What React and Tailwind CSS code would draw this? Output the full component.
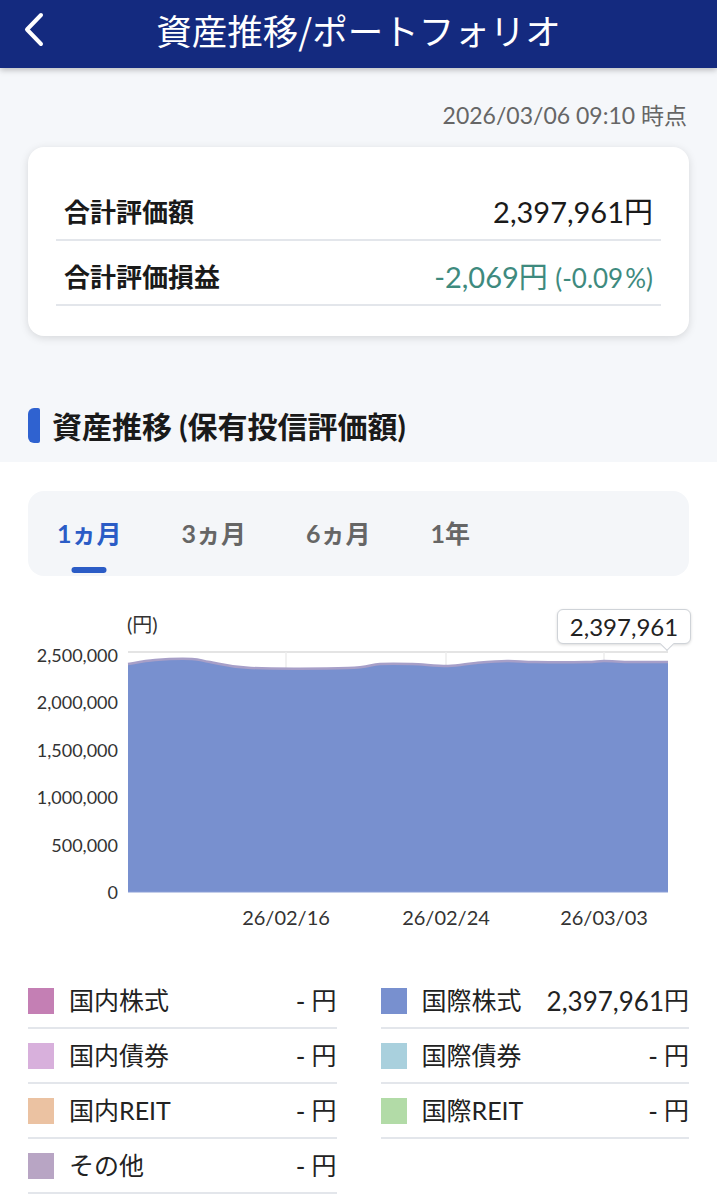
import React from "react";

const pts = [
  [128, 88], [155, 84], [192, 83], [210, 86], [251, 92], [348, 92], [380, 88],
  [412, 88], [448, 90], [476, 87], [507, 85], [535, 86], [586, 86], [604, 85],
  [631, 86], [668, 86],
];

function smoothLine(p) {
  let d = `M${p[0][0]},${p[0][1]}`;
  for (let i = 0; i < p.length - 1; i++) {
    const p0 = p[i - 1] || p[i];
    const p1 = p[i];
    const p2 = p[i + 1];
    const p3 = p[i + 2] || p2;
    const c1x = p1[0] + (p2[0] - p0[0]) / 6;
    const c1y = p1[1] + (p2[1] - p0[1]) / 6;
    const c2x = p2[0] - (p3[0] - p1[0]) / 6;
    const c2y = p2[1] - (p3[1] - p1[1]) / 6;
    d += ` C${c1x},${c1y} ${c2x},${c2y} ${p2[0]},${p2[1]}`;
  }
  return d;
}

const line = smoothLine(pts);
const area = `${line} L668,316 L128,316 Z`;

const yLabels = [
  ["2,500,000", 85.5],
  ["2,000,000", 133],
  ["1,500,000", 180.5],
  ["1,000,000", 228],
  ["500,000", 275.5],
  ["0", 323],
];

const xLabels = [
  ["26/02/16", 286],
  ["26/02/24", 446],
  ["26/03/03", 604],
];

function Chart() {
  return (
    <div className="relative h-[398px]">
      <svg width="717" height="398" viewBox="0 0 717 398" className="block">
        <text x="127" y="56" fontSize="20" fill="#333" fontFamily="Lato, 'Noto Sans CJK JP', sans-serif">
          (円)
        </text>
        {yLabels.map(([t, y]) => (
          <text key={t} x="118" y={y} textAnchor="end" fontSize="18" fill="#333" fontFamily="Lato, sans-serif">
            {t}
          </text>
        ))}
        <line x1="128" y1="76" x2="668" y2="76" stroke="#e4e4e4" strokeWidth="2" />
        {xLabels.map(([t, x]) => (
          <line key={t} x1={x} y1="76" x2={x} y2="316" stroke="#ececec" strokeWidth="1.5" />
        ))}
        <path d={area} fill="#7890cf" />
        <path d={line} fill="none" stroke="#a79fc8" strokeWidth="2.5" />
        <line x1="128" y1="316" x2="668" y2="316" stroke="#8a9ed6" strokeWidth="1" />
        {xLabels.map(([t, x]) => (
          <text key={t} x={x} y="349" textAnchor="middle" fontSize="20" fill="#333" fontFamily="Lato, sans-serif">
            {t}
          </text>
        ))}
      </svg>
      <div className="absolute left-[557px] top-[33px] w-[134px] h-[35px] rounded-[6px] border border-[#cfd3d8] bg-white shadow-[0_1px_3px_rgba(0,0,0,0.15)] flex items-center justify-center">
        <span className="text-[24px] leading-none text-[#222] font-['Lato',sans-serif]">2,397,961</span>
        <div className="absolute left-[104px] bottom-[-6px] w-[10px] h-[10px] rotate-45 bg-white border-r border-b border-[#cfd3d8]"></div>
      </div>
    </div>
  );
}

const leftLegend = [
  ["国内株式", "#c47fb4", null],
  ["国内債券", "#d8b0dc", null],
  ["国内REIT", "#ebc2a2", null],
  ["その他", "#b8a5c4", null],
];
const rightLegend = [
  ["国際株式", "#7890cf", "2,397,961"],
  ["国際債券", "#a9d0dd", null],
  ["国際REIT", "#b2dba7", null],
];

function LegendCol({ items }) {
  return (
    <div className="flex flex-col">
      {items.map(([label, color, val]) => (
        <div key={label} className="h-[55px] flex items-center border-b-2 border-[#e3e6eb]">
          <div className="w-[26px] h-[26px] shrink-0" style={{ backgroundColor: color }}></div>
          <span className="ml-[15px] text-[25px] leading-none text-[#222]">{label}</span>
          <span className="ml-auto text-[26px] leading-none text-[#222] flex items-center">
            {val ? <span>{val}</span> : <span>-</span>}
            <span className={val ? "text-[25px]" : "ml-[6px] text-[25px]"}>円</span>
          </span>
        </div>
      ))}
    </div>
  );
}

export default function App() {
  return (
    <div className="w-[717px] min-h-[1200px] bg-white font-['Lato','Noto_Sans_CJK_JP',sans-serif] text-[#222]">
      <header className="relative z-10 h-[68px] bg-[#142a7f] flex items-center justify-center pb-[8px] shadow-[0_2px_6px_rgba(0,0,0,0.25)]">
        <svg className="absolute left-[20px] top-[10px]" width="30" height="40" viewBox="0 0 30 40">
          <path d="M21 5 L7 19.5 L21 34" fill="none" stroke="white" strokeWidth="4" strokeLinecap="round" strokeLinejoin="round" />
        </svg>
        <h1 className="text-[35.5px] leading-none text-white font-normal font-['Noto_Sans_CJK_JP',sans-serif]">
          資産推移/ポートフォリオ
        </h1>
      </header>

      <div className="bg-[#f5f7fa] pt-[35px] pb-[19px]">
        <div className="px-[30px] text-right text-[23px] leading-[24px] text-[#666]">
          2026/03/06 09:10 時点
        </div>
        <div className="mx-[28px] mt-[20px] h-[189px] rounded-[16px] bg-white shadow-[0_2px_8px_rgba(0,0,0,0.13)] px-[28px] pt-[29px]">
          <div className="h-[65px] pt-[8px] px-[8px] flex items-center border-b-2 border-[#e3e6eb]">
            <span className="text-[26px] font-bold leading-none text-[#1a1a1a]">合計評価額</span>
            <span className="ml-auto text-[29px] leading-none text-[#1a1a1a]">2,397,961円</span>
          </div>
          <div className="h-[65px] pt-[8px] px-[8px] flex items-center border-b-2 border-[#e3e6eb]">
            <span className="text-[26px] font-bold leading-none text-[#1a1a1a]">合計評価損益</span>
            <span className="ml-auto text-[29px] leading-none text-[#3e8a7e]">
              -2,069円 <span className="text-[26px]">(-0.09<span className="ml-[2px]">%</span>)</span>
            </span>
          </div>
        </div>
        <div className="mt-[72px] h-[35px] flex items-center">
          <div className="ml-[28px] w-[12px] h-[35px] rounded-l-[6px] rounded-r-[2px] bg-[#2f62d0]"></div>
          <h2 className="ml-[12px] text-[30px] font-bold leading-none text-[#1a1a1a]">資産推移 (保有投信評価額)</h2>
        </div>
      </div>

      <div className="bg-white pt-[29px]">
        <div className="mx-[28px] h-[85px] rounded-[16px] bg-[#f4f6f9] flex pl-[29px] gap-[60px]">
          <div className="relative h-full flex items-center">
            <span className="text-[25px] font-bold leading-none text-[#2b5cc6]">1ヵ月</span>
            <div className="absolute bottom-[3px] left-1/2 -translate-x-1/2 w-[35px] h-[6px] rounded-full bg-[#2b5cc6]"></div>
          </div>
          <div className="h-full flex items-center">
            <span className="text-[25px] font-bold leading-none text-[#666]">3ヵ月</span>
          </div>
          <div className="h-full flex items-center">
            <span className="text-[25px] font-bold leading-none text-[#666]">6ヵ月</span>
          </div>
          <div className="h-full flex items-center">
            <span className="text-[25px] font-bold leading-none text-[#666]">1年</span>
          </div>
        </div>

        <Chart />

        <div className="px-[28px] grid grid-cols-2 gap-x-[44px]">
          <LegendCol items={leftLegend} />
          <LegendCol items={rightLegend} />
        </div>
      </div>
    </div>
  );
}
